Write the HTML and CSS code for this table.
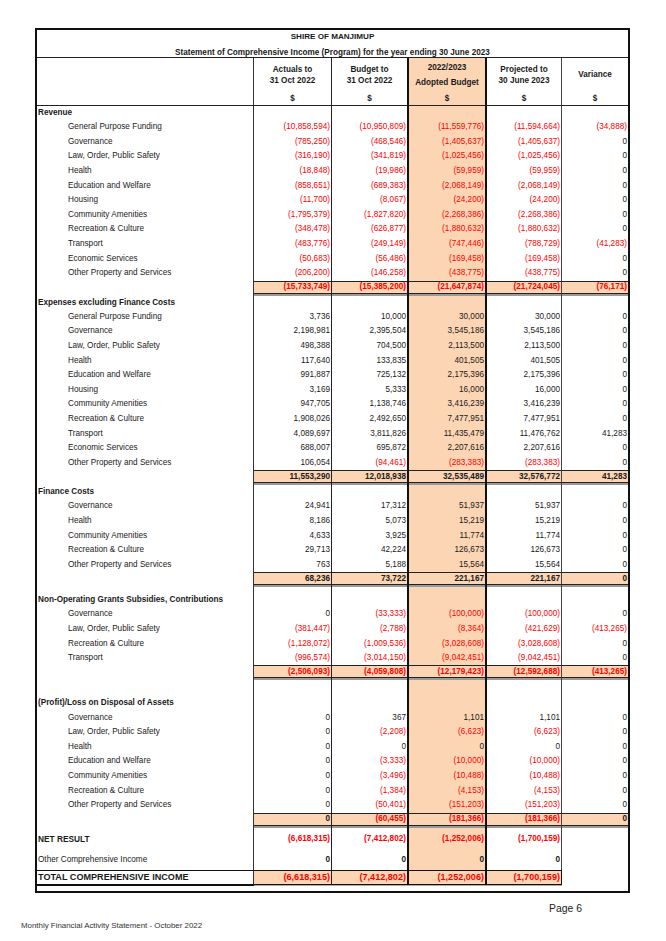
FILE: index.html
```html
<!DOCTYPE html>
<html>
<head>
<meta charset="utf-8">
<link rel="stylesheet" href="styles.css">
</head>
<body>
<div class="sheet">
  <div class="title">SHIRE OF MANJIMUP</div>
  <div class="subtitle">Statement of Comprehensive Income (Program) for the year ending 30 June 2023</div>
  <div class="row head">
    <div class="c"></div>
    <div class="c h"><span>Actuals to<br>31 Oct 2022</span><span>$</span></div>
    <div class="c h"><span>Budget to<br>31 Oct 2022</span><span>$</span></div>
    <div class="c h adopt"><span>2022/2023<br>Adopted Budget</span><span>$</span></div>
    <div class="c h"><span>Projected to<br>30 June 2023</span><span>$</span></div>
    <div class="c h var"><span>Variance</span><span>$</span></div>
  </div>

  <div class="row sec"><div class="c">Revenue</div><div class="c"></div><div class="c"></div><div class="c"></div><div class="c"></div><div class="c"></div></div>
  <div class="row"><div class="c sub">General Purpose Funding</div><div class="c r">(10,858,594)</div><div class="c r">(10,950,809)</div><div class="c r">(11,559,776)</div><div class="c r">(11,594,664)</div><div class="c r">(34,888)</div></div>
  <div class="row"><div class="c sub">Governance</div><div class="c r">(785,250)</div><div class="c r">(468,546)</div><div class="c r">(1,405,637)</div><div class="c r">(1,405,637)</div><div class="c">0</div></div>
  <div class="row"><div class="c sub">Law, Order, Public Safety</div><div class="c r">(316,190)</div><div class="c r">(341,819)</div><div class="c r">(1,025,456)</div><div class="c r">(1,025,456)</div><div class="c">0</div></div>
  <div class="row"><div class="c sub">Health</div><div class="c r">(18,848)</div><div class="c r">(19,986)</div><div class="c r">(59,959)</div><div class="c r">(59,959)</div><div class="c">0</div></div>
  <div class="row"><div class="c sub">Education and Welfare</div><div class="c r">(858,651)</div><div class="c r">(689,383)</div><div class="c r">(2,068,149)</div><div class="c r">(2,068,149)</div><div class="c">0</div></div>
  <div class="row"><div class="c sub">Housing</div><div class="c r">(11,700)</div><div class="c r">(8,067)</div><div class="c r">(24,200)</div><div class="c r">(24,200)</div><div class="c">0</div></div>
  <div class="row"><div class="c sub">Community Amenities</div><div class="c r">(1,795,379)</div><div class="c r">(1,827,820)</div><div class="c r">(2,268,386)</div><div class="c r">(2,268,386)</div><div class="c">0</div></div>
  <div class="row"><div class="c sub">Recreation &amp; Culture</div><div class="c r">(348,478)</div><div class="c r">(626,877)</div><div class="c r">(1,880,632)</div><div class="c r">(1,880,632)</div><div class="c">0</div></div>
  <div class="row"><div class="c sub">Transport</div><div class="c r">(483,776)</div><div class="c r">(249,149)</div><div class="c r">(747,446)</div><div class="c r">(788,729)</div><div class="c r">(41,283)</div></div>
  <div class="row"><div class="c sub">Economic Services</div><div class="c r">(50,683)</div><div class="c r">(56,486)</div><div class="c r">(169,458)</div><div class="c r">(169,458)</div><div class="c">0</div></div>
  <div class="row"><div class="c sub">Other Property and Services</div><div class="c r">(206,200)</div><div class="c r">(146,258)</div><div class="c r">(438,775)</div><div class="c r">(438,775)</div><div class="c">0</div></div>
  <div class="row tot"><div class="c"></div><div class="c r">(15,733,749)</div><div class="c r">(15,385,200)</div><div class="c r">(21,647,874)</div><div class="c r">(21,724,045)</div><div class="c r">(76,171)</div></div>
  <div class="row sep"><div class="c"></div><div class="c"></div><div class="c"></div><div class="c"></div><div class="c"></div><div class="c"></div></div>

  <div class="row sec"><div class="c">Expenses excluding Finance Costs</div><div class="c"></div><div class="c"></div><div class="c"></div><div class="c"></div><div class="c"></div></div>
  <div class="row"><div class="c sub">General Purpose Funding</div><div class="c">3,736</div><div class="c">10,000</div><div class="c">30,000</div><div class="c">30,000</div><div class="c">0</div></div>
  <div class="row"><div class="c sub">Governance</div><div class="c">2,198,981</div><div class="c">2,395,504</div><div class="c">3,545,186</div><div class="c">3,545,186</div><div class="c">0</div></div>
  <div class="row"><div class="c sub">Law, Order, Public Safety</div><div class="c">498,388</div><div class="c">704,500</div><div class="c">2,113,500</div><div class="c">2,113,500</div><div class="c">0</div></div>
  <div class="row"><div class="c sub">Health</div><div class="c">117,640</div><div class="c">133,835</div><div class="c">401,505</div><div class="c">401,505</div><div class="c">0</div></div>
  <div class="row"><div class="c sub">Education and Welfare</div><div class="c">991,887</div><div class="c">725,132</div><div class="c">2,175,396</div><div class="c">2,175,396</div><div class="c">0</div></div>
  <div class="row"><div class="c sub">Housing</div><div class="c">3,169</div><div class="c">5,333</div><div class="c">16,000</div><div class="c">16,000</div><div class="c">0</div></div>
  <div class="row"><div class="c sub">Community Amenities</div><div class="c">947,705</div><div class="c">1,138,746</div><div class="c">3,416,239</div><div class="c">3,416,239</div><div class="c">0</div></div>
  <div class="row"><div class="c sub">Recreation &amp; Culture</div><div class="c">1,908,026</div><div class="c">2,492,650</div><div class="c">7,477,951</div><div class="c">7,477,951</div><div class="c">0</div></div>
  <div class="row"><div class="c sub">Transport</div><div class="c">4,089,697</div><div class="c">3,811,826</div><div class="c">11,435,479</div><div class="c">11,476,762</div><div class="c">41,283</div></div>
  <div class="row"><div class="c sub">Economic Services</div><div class="c">688,007</div><div class="c">695,872</div><div class="c">2,207,616</div><div class="c">2,207,616</div><div class="c">0</div></div>
  <div class="row"><div class="c sub">Other Property and Services</div><div class="c">106,054</div><div class="c r">(94,461)</div><div class="c r">(283,383)</div><div class="c r">(283,383)</div><div class="c">0</div></div>
  <div class="row tot"><div class="c"></div><div class="c">11,553,290</div><div class="c">12,018,938</div><div class="c">32,535,489</div><div class="c">32,576,772</div><div class="c">41,283</div></div>
  <div class="row sep"><div class="c"></div><div class="c"></div><div class="c"></div><div class="c"></div><div class="c"></div><div class="c"></div></div>

  <div class="row sec"><div class="c">Finance Costs</div><div class="c"></div><div class="c"></div><div class="c"></div><div class="c"></div><div class="c"></div></div>
  <div class="row"><div class="c sub">Governance</div><div class="c">24,941</div><div class="c">17,312</div><div class="c">51,937</div><div class="c">51,937</div><div class="c">0</div></div>
  <div class="row"><div class="c sub">Health</div><div class="c">8,186</div><div class="c">5,073</div><div class="c">15,219</div><div class="c">15,219</div><div class="c">0</div></div>
  <div class="row"><div class="c sub">Community Amenities</div><div class="c">4,633</div><div class="c">3,925</div><div class="c">11,774</div><div class="c">11,774</div><div class="c">0</div></div>
  <div class="row"><div class="c sub">Recreation &amp; Culture</div><div class="c">29,713</div><div class="c">42,224</div><div class="c">126,673</div><div class="c">126,673</div><div class="c">0</div></div>
  <div class="row"><div class="c sub">Other Property and Services</div><div class="c">763</div><div class="c">5,188</div><div class="c">15,564</div><div class="c">15,564</div><div class="c">0</div></div>
  <div class="row tot"><div class="c"></div><div class="c">68,236</div><div class="c">73,722</div><div class="c">221,167</div><div class="c">221,167</div><div class="c">0</div></div>
  <div class="row sep"><div class="c"></div><div class="c"></div><div class="c"></div><div class="c"></div><div class="c"></div><div class="c"></div></div>
  <div class="row gap-s"><div class="c"></div><div class="c"></div><div class="c"></div><div class="c"></div><div class="c"></div><div class="c"></div></div>

  <div class="row sec"><div class="c">Non-Operating Grants Subsidies, Contributions</div><div class="c"></div><div class="c"></div><div class="c"></div><div class="c"></div><div class="c"></div></div>
  <div class="row"><div class="c sub">Governance</div><div class="c">0</div><div class="c r">(33,333)</div><div class="c r">(100,000)</div><div class="c r">(100,000)</div><div class="c">0</div></div>
  <div class="row"><div class="c sub">Law, Order, Public Safety</div><div class="c r">(381,447)</div><div class="c r">(2,788)</div><div class="c r">(8,364)</div><div class="c r">(421,629)</div><div class="c r">(413,265)</div></div>
  <div class="row"><div class="c sub">Recreation &amp; Culture</div><div class="c r">(1,128,072)</div><div class="c r">(1,009,536)</div><div class="c r">(3,028,608)</div><div class="c r">(3,028,608)</div><div class="c">0</div></div>
  <div class="row"><div class="c sub">Transport</div><div class="c r">(996,574)</div><div class="c r">(3,014,150)</div><div class="c r">(9,042,451)</div><div class="c r">(9,042,451)</div><div class="c">0</div></div>
  <div class="row tot"><div class="c"></div><div class="c r">(2,506,093)</div><div class="c r">(4,059,808)</div><div class="c r">(12,179,423)</div><div class="c r">(12,592,688)</div><div class="c r">(413,265)</div></div>
  <div class="row sep"><div class="c"></div><div class="c"></div><div class="c"></div><div class="c"></div><div class="c"></div><div class="c"></div></div>
  <div class="row gap-l"><div class="c"></div><div class="c"></div><div class="c"></div><div class="c"></div><div class="c"></div><div class="c"></div></div>

  <div class="row sec"><div class="c">(Profit)/Loss on Disposal of Assets</div><div class="c"></div><div class="c"></div><div class="c"></div><div class="c"></div><div class="c"></div></div>
  <div class="row"><div class="c sub">Governance</div><div class="c">0</div><div class="c">367</div><div class="c">1,101</div><div class="c">1,101</div><div class="c">0</div></div>
  <div class="row"><div class="c sub">Law, Order, Public Safety</div><div class="c">0</div><div class="c r">(2,208)</div><div class="c r">(6,623)</div><div class="c r">(6,623)</div><div class="c">0</div></div>
  <div class="row"><div class="c sub">Health</div><div class="c">0</div><div class="c">0</div><div class="c">0</div><div class="c">0</div><div class="c">0</div></div>
  <div class="row"><div class="c sub">Education and Welfare</div><div class="c">0</div><div class="c r">(3,333)</div><div class="c r">(10,000)</div><div class="c r">(10,000)</div><div class="c">0</div></div>
  <div class="row"><div class="c sub">Community Amenities</div><div class="c">0</div><div class="c r">(3,496)</div><div class="c r">(10,488)</div><div class="c r">(10,488)</div><div class="c">0</div></div>
  <div class="row"><div class="c sub">Recreation &amp; Culture</div><div class="c">0</div><div class="c r">(1,384)</div><div class="c r">(4,153)</div><div class="c r">(4,153)</div><div class="c">0</div></div>
  <div class="row"><div class="c sub">Other Property and Services</div><div class="c">0</div><div class="c r">(50,401)</div><div class="c r">(151,203)</div><div class="c r">(151,203)</div><div class="c">0</div></div>
  <div class="row tot"><div class="c"></div><div class="c">0</div><div class="c r">(60,455)</div><div class="c r">(181,366)</div><div class="c r">(181,366)</div><div class="c">0</div></div>
  <div class="row sep"><div class="c"></div><div class="c"></div><div class="c"></div><div class="c"></div><div class="c"></div><div class="c"></div></div>

  <div class="row net"><div class="c">NET RESULT</div><div class="c r">(6,618,315)</div><div class="c r">(7,412,802)</div><div class="c r">(1,252,006)</div><div class="c r">(1,700,159)</div><div class="c"></div></div>
  <div class="row oci"><div class="c">Other Comprehensive Income</div><div class="c">0</div><div class="c">0</div><div class="c">0</div><div class="c">0</div><div class="c"></div></div>
  <div class="row tci"><div class="c">TOTAL COMPREHENSIVE INCOME</div><div class="c r">(6,618,315)</div><div class="c r">(7,412,802)</div><div class="c r">(1,252,006)</div><div class="c r">(1,700,159)</div><div class="c"></div></div>
  <div class="row end"><div class="c"></div><div class="c"></div><div class="c"></div><div class="c"></div><div class="c"></div><div class="c"></div></div>
</div>
<div class="page">Page 6</div>
<div class="foot">Monthly Financial Activity Statement - October 2022</div>
</body>
</html>
```
FILE: styles.css
```css
* { box-sizing: border-box; }
body {
  margin: 0;
  font-family: "Liberation Sans", Arial, sans-serif;
  color: #1a1a1a;
  background: #fff;
}
.sheet {
  width: 595px;
  margin: 28px 0 0 35px;
  border: 2px solid #111;
}
.title {
  height: 13px;
  line-height: 13px;
  text-align: center;
  font-weight: bold;
  font-size: 8.1px;
}
.subtitle {
  height: 15px;
  padding-top: 3.5px;
  line-height: 11px;
  text-align: center;
  font-weight: bold;
  font-size: 8.2px;
  border-bottom: 1px solid #222;
}
.row {
  display: grid;
  grid-template-columns: 217px 78px 77px 78px 75px 66px;
  height: 14.6px;
  font-size: 8.2px;
}
.c {
  display: flex;
  align-items: center;
  justify-content: flex-end;
  padding-right: 1px;
  white-space: nowrap;
  line-height: 10px;
}
.c:nth-child(1) { justify-content: flex-start; border-right: 1px solid #333; padding-left: 1px; }
.c:nth-child(2) { border-right: 1px solid #222; }
.c:nth-child(3) { border-right: 2px solid #111; }
.c:nth-child(4) { border-right: 2px solid #111; background: #fcd5b4; }
.c:nth-child(5) { border-right: 1px solid #444; }
.c.sub { padding-left: 31px; color: #222; }
.r { color: #f00; }

/* header */
.head { height: 48px; border-bottom: 1px solid #222; }
.h {
  flex-direction: column;
  justify-content: space-between;
  align-items: center;
  padding: 6px 0 1px;
  font-weight: bold;
  line-height: 11px;
  text-align: center;
}
.h.adopt { padding-top: 2px; }
.h.adopt span:first-child { line-height: 15px; }
.h.var { padding-top: 10.5px; }

/* section heading */
.sec { height: 14px; }
.sec .c:nth-child(1) { font-weight: bold; }

/* totals */
.tot { height: 13px; }
.tot .c:not(:first-child) {
  background: #fcd5b4;
  border-top: 1px solid #222;
  border-bottom: 1px solid #222;
  font-weight: bold;
}
.sep { height: 2px; }
.sep .c:not(:first-child) { background: #9a9a9a; }
.gap-s { height: 6px; }
.gap-l { height: 16px; }

/* result rows */
.net { height: 23px; }
.net .c { font-weight: bold; }
.net .c:nth-child(1) { font-size: 8.3px; }
.oci { height: 19px; }
.oci .c:not(:first-child) { font-weight: bold; }
.tci { height: 15px; font-size: 9.1px; }
.tci .c { font-weight: bold; border-top: 1px solid #111; border-bottom: 1px solid #111; }
.tci .c:not(:first-child) { background: #fcd5b4; }
.tci .c:nth-child(5) { border-right: 1px solid #111; }
.tci .c:nth-child(6) { border-top: none; border-bottom: none; background: #fff; }
.end { height: 6.5px; }
.end .c { border-right: none; background: #fff; }
.end .c:nth-child(2), .end .c:nth-child(3), .end .c:nth-child(4), .end .c:nth-child(5) {
  border-top: 1px solid #aaa;
}
.end .c:nth-child(1) { border-top: 1px solid #111; }

/* footer */
.page {
  margin-top: 10px;
  height: 12px;
  line-height: 12px;
  font-size: 10.4px;
  text-align: right;
  padding-right: 84px;
  color: #222;
}
.foot {
  margin-top: 6px;
  padding-left: 21px;
  font-size: 7.9px;
  line-height: 10px;
  color: #333;
}
```
